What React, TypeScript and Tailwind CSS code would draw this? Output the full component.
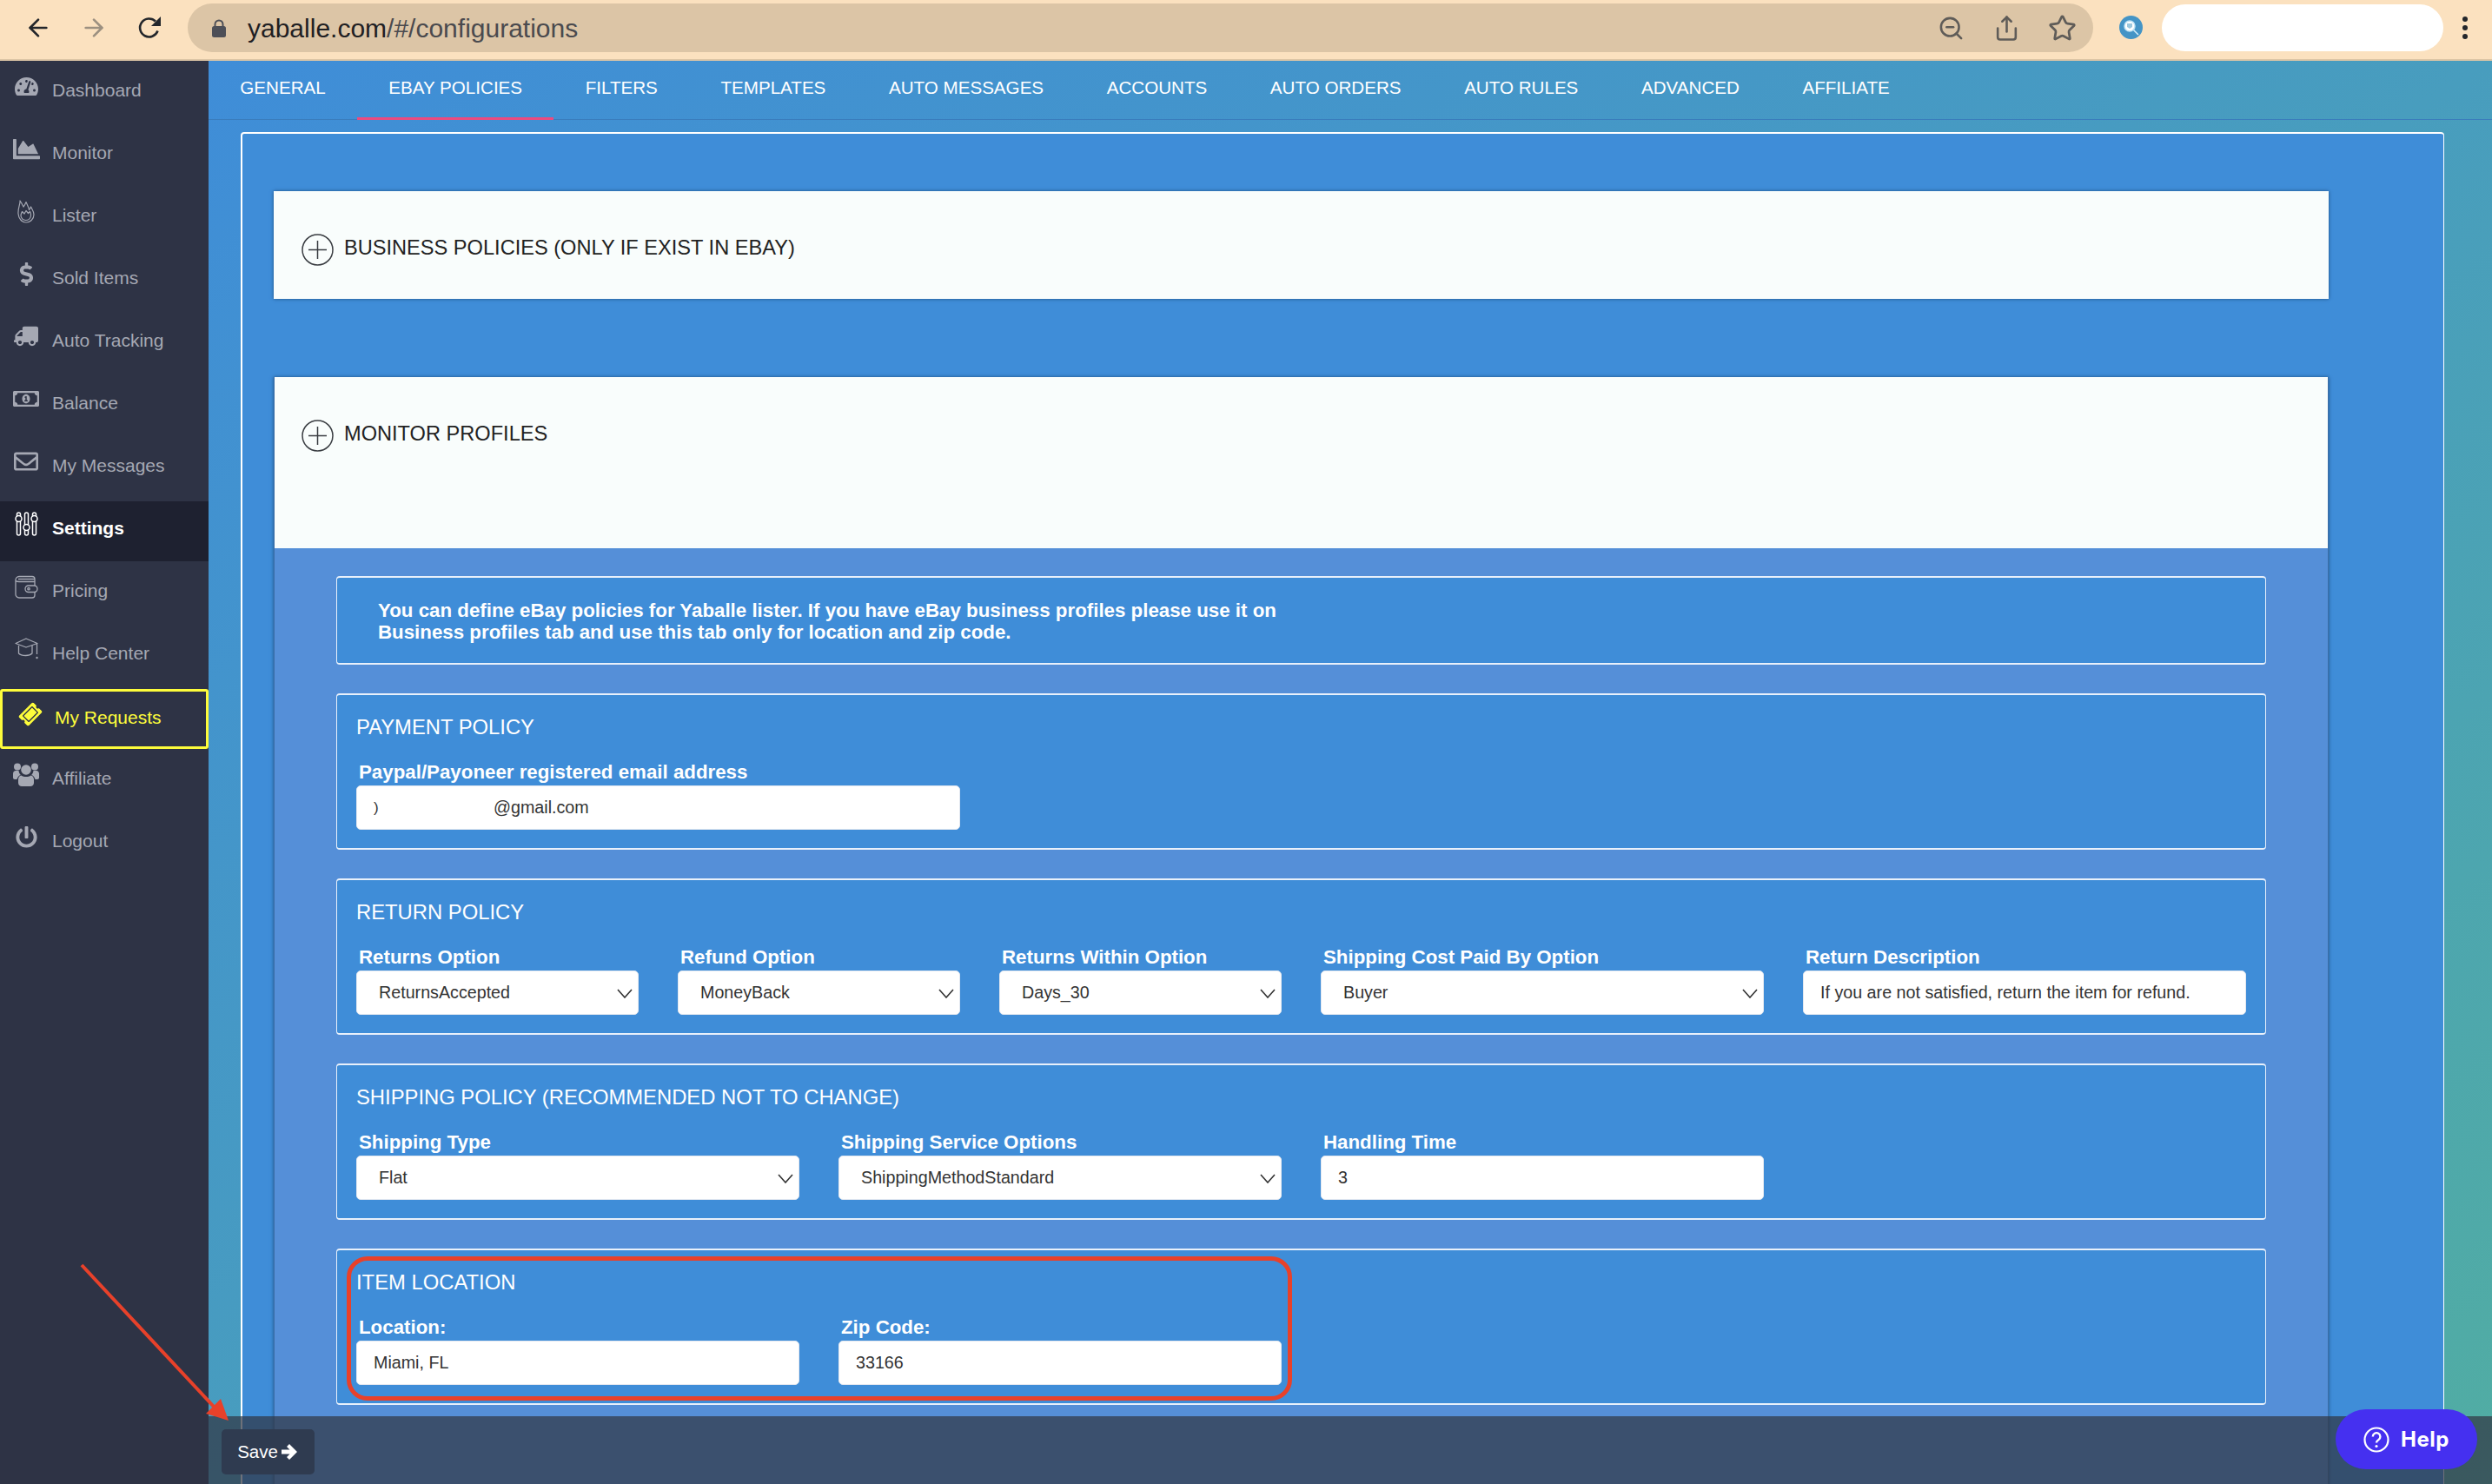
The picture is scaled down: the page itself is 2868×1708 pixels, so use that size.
import { ArrowLeft, ArrowRight, Share, Star, ZoomOut } from "lucide-react";
import {
  FaChartArea,
  FaDollarSign,
  FaPowerOff,
  FaRegEnvelope,
  FaRegMoneyBillAlt,
  FaTachometerAlt,
  FaTicketAlt,
  FaTruck,
} from "react-icons/fa";
import type { ReactNode } from "react";

function FlameIcon() {
  return (
    <svg width="20" height="27" viewBox="0 0 20 27" fill="none" stroke="currentColor" strokeWidth="1.2" strokeLinejoin="round">
      <path d="M3 1c.5 4-2.5 8-2 15 .4 6 4.500 10 9 10s9-3.500 9-9c0-3.500-2-6-3.500-9-.5 1.500-1 2.500-2 3.500C13 8 11 5 10 2.500 9 5 8 7 7 8 6 6 4.500 3 3 1Z" />
      <path d="M4 18c0-2 1-3 1.500-4.500L8 16l2-3.500 2.500 3 2-2c.8 1.500 1.500 3 1 5-.6 3-3 5-6 5s-5.500-2.500-5.500-5.500Z" />
    </svg>
  );
}

function SlidersIcon() {
  return (
    <svg width="27" height="28" viewBox="0 0 27 28" fill="none" stroke="currentColor" strokeWidth="1.500">
      <rect x="2.500" y="1" width="4" height="26" rx="2" />
      <rect x="11.500" y="1" width="4" height="26" rx="2" />
      <rect x="20.500" y="1" width="4" height="26" rx="2" />
      <circle cx="4.500" cy="8" r="3.500" fill="#1e2130" />
      <circle cx="13.500" cy="18" r="3.500" fill="#1e2130" />
      <circle cx="22.500" cy="8" r="3.500" fill="#1e2130" />
    </svg>
  );
}

function WalletIcon() {
  return (
    <svg width="27" height="27" viewBox="0 0 27 27" fill="none" stroke="currentColor" strokeWidth="1.300">
      <path d="M1 6a4 4 0 0 1 4-4.500h15a3 3 0 0 1 3 3V12M23 20v3a3 3 0 0 1-3 3H5a4 4 0 0 1-4-4V6" />
      <path d="M1 6.500c1 1 2 1 4 1h18M4 4.500h19" />
      <rect x="12" y="12" width="14" height="7.500" rx="3.700" />
      <circle cx="16" cy="15.700" r="1.200" />
    </svg>
  );
}

function CapIcon() {
  return (
    <svg width="27" height="26" viewBox="0 0 27 26" fill="none" stroke="currentColor" strokeWidth="1.300" strokeLinejoin="round">
      <path d="M1 6.500 13 1l13 5.500-13 4.500L1 6.500Z" />
      <path d="M4.500 9v9c2 2 5 2.500 8 2.500s5.500-.5 7.500-2.500V9" />
      <path d="M25.500 7v12" />
      <circle cx="25.500" cy="23" r="1.200" fill="currentColor" stroke="none" />
    </svg>
  );
}

function UsersIcon() {
  return (
    <svg width="30" height="27" viewBox="0 0 30 27" fill="currentColor">
      <circle cx="5" cy="4.500" r="4" />
      <circle cx="25" cy="4.500" r="4" />
      <circle cx="15" cy="8" r="5.800" />
      <path d="M0 12.500C0 10.500 1.500 9 3 9h3.500c.3 2 1 3.500 2.200 4.800C6.500 15 5 17 4.500 19H2c-1.200 0-2-.8-2-2v-4.500Z" />
      <path d="M30 12.500c0-2-1.500-3.500-3-3.500h-3.500c-.3 2-1 3.500-2.200 4.800 2.200 1.200 3.700 3.200 4.200 5.200H28c1.200 0 2-.8 2-2v-4.500Z" />
      <path d="M6 19c0-2.500 2-4.500 3.500-4.500 1.500 1 3.500 1.500 5.500 1.500s4-.5 5.500-1.500C22 14.500 24 16.500 24 19v4c0 2.500-2 4-4 4H10c-2 0-4-1.500-4-4v-4Z" />
    </svg>
  );
}

const nav: { label: string; icon: ReactNode; active?: boolean; marked?: boolean }[] = [
  { label: "Dashboard", icon: <FaTachometerAlt size={27} /> },
  { label: "Monitor", icon: <FaChartArea size={31} /> },
  { label: "Lister", icon: <FlameIcon /> },
  { label: "Sold Items", icon: <FaDollarSign size={27} /> },
  { label: "Auto Tracking", icon: <FaTruck size={28} className="-scale-x-100" /> },
  { label: "Balance", icon: <FaRegMoneyBillAlt size={30} /> },
  { label: "My Messages", icon: <FaRegEnvelope size={28} /> },
  { label: "Settings", icon: <SlidersIcon />, active: true },
  { label: "Pricing", icon: <WalletIcon /> },
  { label: "Help Center", icon: <CapIcon /> },
  { label: "My Requests", icon: <FaTicketAlt size={24} className="-rotate-45" />, marked: true },
  { label: "Affiliate", icon: <UsersIcon /> },
  { label: "Logout", icon: <FaPowerOff size={25} /> },
];

const tabs = [
  "GENERAL",
  "EBAY POLICIES",
  "FILTERS",
  "TEMPLATES",
  "AUTO MESSAGES",
  "ACCOUNTS",
  "AUTO ORDERS",
  "AUTO RULES",
  "ADVANCED",
  "AFFILIATE",
];

function TopBar() {
  return (
    <div className="flex h-[70px] shrink-0 items-start border-b-2 border-[#dcc5a6] bg-[#fbe1bf] pt-[4px] pr-[28px] pl-[12px]">
      <div className="flex h-[56px] w-[64px] items-center justify-center text-[#23262b]">
        <ArrowLeft size={32} strokeWidth={2} />
      </div>
      <div className="flex h-[56px] w-[64px] items-center justify-center text-[#9c9080]">
        <ArrowRight size={32} strokeWidth={2} />
      </div>
      <div className="flex h-[56px] w-[64px] items-center justify-center text-[#23262b]">
        <svg width="28" height="28" viewBox="0 0 28 28" fill="none">
          <path d="M23.500 17.500A10.500 10.500 0 1 1 21 6.500" stroke="currentColor" strokeWidth="2.600" />
          <path d="M27 1v11H16L27 1Z" fill="currentColor" />
        </svg>
      </div>
      <div className="ml-[12px] flex h-[56px] min-w-0 flex-1 items-center rounded-full bg-[#dcc5a6] pr-[4px] pl-[28px]">
        <svg width="16" height="21" viewBox="0 0 16 21" className="text-[#4d4f57]">
          <path d="M3.500 9V6a4.500 4.500 0 0 1 9 0v3" fill="none" stroke="currentColor" strokeWidth="2" />
          <rect x="0" y="8" width="16" height="13" rx="2.500" fill="currentColor" />
        </svg>
        <div className="ml-[25px] flex-1 text-[30px] text-[#4a4a4e]">
          <span className="text-[#1f2023]">yaballe.com</span>/#/configurations
        </div>
        <div className="flex h-[56px] w-[64px] items-center justify-center text-[#5f5c58]">
          <ZoomOut size={31} strokeWidth={2} />
        </div>
        <div className="flex h-[56px] w-[64px] items-center justify-center text-[#5f5c58]">
          <Share size={31} strokeWidth={2} />
        </div>
        <div className="flex h-[56px] w-[64px] items-center justify-center text-[#5f5c58]">
          <Star size={33} strokeWidth={2} />
        </div>
      </div>
      <div className="mt-[14px] ml-[30px] flex h-[27px] w-[27px] shrink-0 items-center justify-center rounded-full bg-[#4494c6]">
        <svg width="19" height="19" viewBox="0 0 19 19" fill="none">
          <circle cx="8" cy="8" r="6" fill="#fff" stroke="#bfe3f5" strokeWidth="1.500" />
          <path d="M12.500 12.500 18 18" stroke="#d8f0fb" strokeWidth="1.500" />
          <path d="M5 5h6v4l-3 2-3-2V5Z" fill="#9cc8de" />
        </svg>
      </div>
      <div className="ml-[22px] h-[54px] w-[324px] shrink-0 translate-y-px rounded-[28px] bg-white" />
      <div className="mt-[15px] ml-[22px] flex shrink-0 flex-col gap-[4px]">
        <div className="h-[6px] w-[6px] rounded-full bg-[#23262b]" />
        <div className="h-[6px] w-[6px] rounded-full bg-[#23262b]" />
        <div className="h-[6px] w-[6px] rounded-full bg-[#23262b]" />
      </div>
    </div>
  );
}

function Sidebar() {
  return (
    <aside className="flex w-[240px] shrink-0 flex-col gap-[3px] bg-[#2e3345] pt-[3px]">
      {nav.map((item) => (
        <div
          key={item.label}
          className={
            item.active
              ? "flex h-[69px] items-center bg-[#1e2130] pb-[8px] text-[21px] font-bold text-white"
              : item.marked
                ? "flex h-[69px] items-center rounded-[3px] border-[3px] border-[#fdfc3b] pb-[3px] text-[21px] text-[#fdfc3b]"
                : "flex h-[69px] items-center pb-[7px] text-[21px] text-[#a5a8b3]"
          }
        >
          <span className={item.marked ? "flex w-[60px] justify-center pb-[9px] pl-[3px]" : "flex w-[60px] justify-center pb-[10px]"}>
            {item.icon}
          </span>
          <span>{item.label}</span>
        </div>
      ))}
    </aside>
  );
}

function PlusCircle() {
  return (
    <svg width="37" height="37" viewBox="0 0 37 37" fill="none" stroke="#3a3d42" strokeWidth="1.500">
      <circle cx="18.500" cy="18.500" r="17.500" />
      <path d="M18.500 8v21M8 18.500h21" />
    </svg>
  );
}

function Section({ title, children }: { title: string; children: ReactNode }) {
  return (
    <section className="relative rounded-[4px] border-x border-y-2 border-[#e8f0fb] bg-[#3f8dd8] px-[22px] pt-[25px] pb-[21.5px]">
      <h3 className="text-[23.8px] leading-[24px] text-white">{title}</h3>
      <div className="mt-[28px] grid grid-cols-12 gap-x-[45px]">{children}</div>
    </section>
  );
}

function Field({ label, span, value, select }: { label: string; span: string; value: string; select?: boolean }) {
  return (
    <div className={span}>
      <div className="pl-[3px] text-[22.3px] leading-[24px] font-bold text-white">{label}</div>
      <div
        className={
          select
            ? "mt-[3px] flex h-[51px] items-center justify-between rounded-[5px] border border-[#e3e8f0] bg-white pt-[2px] pr-[6px] pl-[25px] text-[19.7px] text-[#333]"
            : "mt-[3px] flex h-[51px] items-center rounded-[5px] border border-[#e3e8f0] bg-white pt-[2px] pl-[19px] text-[19.7px] text-[#333]"
        }
      >
        <span>{value}</span>
        {select && (
          <svg width="18" height="11" viewBox="0 0 18 11" fill="none" stroke="#333" strokeWidth="1.600">
            <path d="m1 1 8 9 8-9" />
          </svg>
        )}
      </div>
    </div>
  );
}

function Panel() {
  return (
    <div className="mt-[14px] mr-[55px] ml-[37px] flex-1 overflow-hidden rounded-t-[4px] border-t-2 border-r border-l-2 border-white bg-[#3f8dd8] pt-[66px] pr-[132px] pl-[36px]">
      <div className="flex h-[124px] items-start gap-[12px] bg-[#f9fdfc] pt-[49px] pl-[32px] text-[23.6px] text-[#222] shadow-[0_0_4px_#1f4f80]">
        <PlusCircle />
        <span className="leading-[33px]">BUSINESS POLICIES (ONLY IF EXIST IN EBAY)</span>
      </div>
      <div className="mt-[90px] border-x border-[#3b6ea8] shadow-[0_0_4px_#1f4f80]">
        <div className="flex h-[197px] items-start gap-[12px] bg-[#f9fdfc] pt-[49px] pl-[31px] text-[23.6px] text-[#222]">
          <PlusCircle />
          <span className="leading-[33px]">MONITOR PROFILES</span>
        </div>
        <div className="flex flex-col gap-[32.5px] bg-[#558fd8] px-[71px] pt-[32px] pb-[200px]">
          <section className="h-[102px] rounded-[4px] border-x border-y-2 border-[#e8f0fb] bg-[#3f8dd8] pt-[25px] pl-[47px] text-[22.3px] leading-[25px] font-bold text-white">
            You can define eBay policies for Yaballe lister. If you have eBay business profiles please use it on
            <br />
            Business profiles tab and use this tab only for location and zip code.
          </section>
          <Section title="PAYMENT POLICY">
            <div className="col-span-4">
              <div className="pl-[3px] text-[22.3px] leading-[24px] font-bold text-white">
                Paypal/Payoneer registered email address
              </div>
              <div className="mt-[3px] flex h-[51px] items-center rounded-[5px] border border-[#e3e8f0] bg-white pt-[2px] pl-[19px] text-[19.7px] text-[#333]">
                <span className="w-[8px] text-[17px]">)</span>
                <span className="ml-[130px]">@gmail.com</span>
              </div>
            </div>
          </Section>
          <Section title="RETURN POLICY">
            <Field span="col-span-2" label="Returns Option" value="ReturnsAccepted" select />
            <Field span="col-span-2" label="Refund Option" value="MoneyBack" select />
            <Field span="col-span-2" label="Returns Within Option" value="Days_30" select />
            <Field span="col-span-3" label="Shipping Cost Paid By Option" value="Buyer" select />
            <Field span="col-span-3" label="Return Description" value="If you are not satisfied, return the item for refund." />
          </Section>
          <Section title="SHIPPING POLICY (RECOMMENDED NOT TO CHANGE)">
            <Field span="col-span-3" label="Shipping Type" value="Flat" select />
            <Field span="col-span-3" label="Shipping Service Options" value="ShippingMethodStandard" select />
            <Field span="col-span-3" label="Handling Time" value="3" />
          </Section>
          <Section title="ITEM LOCATION">
            <Field span="col-span-3" label="Location:" value="Miami, FL" />
            <Field span="col-span-3" label="Zip Code:" value="33166" />
            <div className="absolute top-[7px] left-[11px] h-[166px] w-[1088px] rounded-[24px] border-[5px] border-[#e8412a]" />
          </Section>
        </div>
      </div>
    </div>
  );
}

export default function App() {
  return (
    <div className="relative flex h-screen w-screen flex-col overflow-hidden font-['Liberation_Sans',Arial,sans-serif]">
      <TopBar />
      <div className="flex min-h-0 flex-1">
        <Sidebar />
        <main className="flex min-w-0 flex-1 flex-col bg-[linear-gradient(to_bottom_right,#3f8dd8,#489dbe_50%,#51ada3)]">
          <nav className="flex h-[68px] shrink-0 border-b border-[#3a7cbc] text-[20.6px] text-white">
            {tabs.map((tab) => (
              <div
                key={tab}
                className={
                  tab === "EBAY POLICIES"
                    ? "-mb-px flex h-[68px] items-center border-b-[3px] border-[#ec4a7f] px-[36.3px] pb-[3px]"
                    : "flex h-[68px] items-center px-[36.3px] pb-[6px]"
                }
              >
                {tab}
              </div>
            ))}
          </nav>
          <Panel />
        </main>
      </div>

      <div className="absolute right-0 bottom-0 left-[240px] flex h-[78px] items-start bg-[#313442]/70 pt-[15px] pl-[15px]">
        <div className="flex h-[52px] w-[107px] items-center justify-center gap-[4px] rounded-[5px] bg-[#2f3b50] pr-[2px] text-[20.5px] text-white">
          Save
          <svg width="18" height="18" viewBox="0 0 18 18" fill="currentColor">
            <path d="M9 0l9 9-9 9-3-3 3.500-3.500H0v-5h9.500L6 3z" />
          </svg>
        </div>
      </div>

      <div className="absolute right-[17px] bottom-[17px] flex h-[69px] w-[163px] items-center justify-center gap-[13px] rounded-full bg-[#4530f0] font-['Inter',sans-serif] text-[24px] font-bold tracking-[0.5px] text-white">
        <svg width="30" height="30" viewBox="0 0 30 30" fill="none" stroke="currentColor" strokeWidth="2.200">
          <circle cx="15" cy="15" r="13.500" />
          <path d="M10.800 11.500a4.300 4.300 0 1 1 6.500 3.700c-1.500.9-2.300 1.600-2.300 3.300" strokeWidth="2.400" />
          <circle cx="15" cy="22.500" r="1.600" fill="currentColor" stroke="none" />
        </svg>
        Help
      </div>

      <svg className="pointer-events-none absolute top-[1450px] left-[88px]" width="180" height="190" viewBox="88 1450 180 190">
        <path d="M94 1456 247 1620" stroke="#e8412a" strokeWidth="4" />
        <path d="M263 1635 237 1627 254 1610Z" fill="#e8412a" />
      </svg>
    </div>
  );
}
